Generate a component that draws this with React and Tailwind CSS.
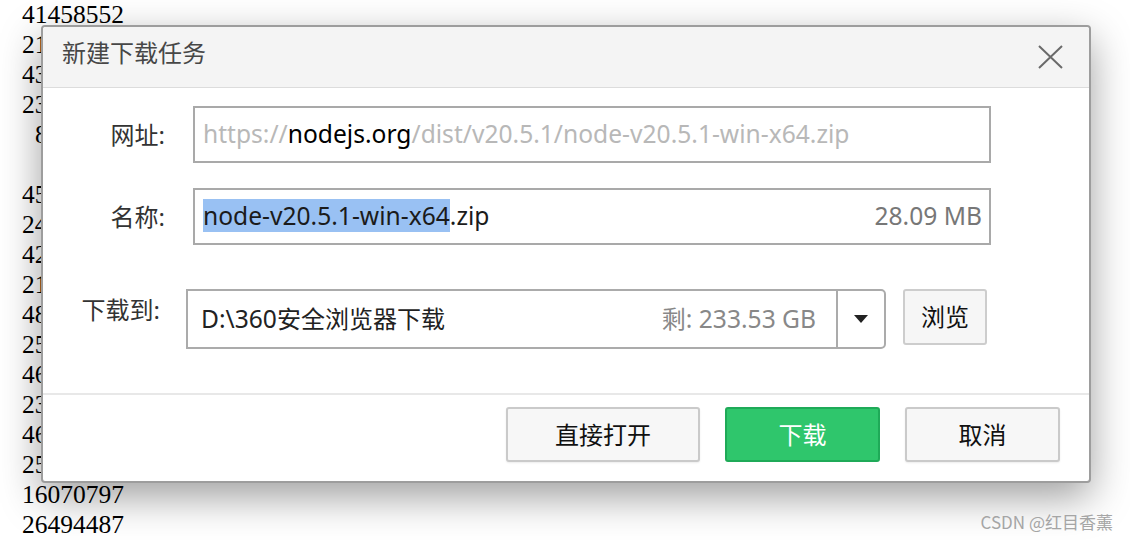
import React from 'react';

// only the digits that show left of the dialog are kept for the covered rows
const LINES = [
  '41458552', '21', '43', '23', '8', '',
  '45', '24', '42', '21', '48', '25',
  '46', '23', '46', '25', '16070797', '26494487',
];

const UI_FONT = "font-['Noto_Sans','Noto_Sans_CJK_SC',sans-serif]";

function Field({ children, className = '' }) {
  return (
    <div
      className={`flex items-center w-[798px] h-[57px] border-2 border-[#a9a9a9] bg-white pl-[8px] pr-[7px] ${className}`}
    >
      {children}
    </div>
  );
}

function GrayButton({ children, width }) {
  return (
    <button
      className={`${width} h-[55px] rounded-[3px] border-2 border-[#cacaca] bg-[#f7f7f7] text-[24px] text-[#111] shadow-[0_1px_2px_rgba(0,0,0,0.08)]`}
    >
      {children}
    </button>
  );
}

export default function App() {
  return (
    <div className="relative w-[1130px] h-[540px] overflow-hidden bg-white">
      {/* text dump behind the dialog */}
      <div className="pl-[22px] font-['Liberation_Serif',serif] text-[25.5px] leading-[30px] text-black">
        {LINES.map((line, i) => (
          <div key={i} className={`h-[30px] ${line === '8' ? 'pl-[13px]' : ''}`}>
            {line}
          </div>
        ))}
      </div>

      {/* download dialog */}
      <div
        className={`absolute left-[41px] top-[25px] w-[1050px] h-[458px] flex flex-col rounded-[4px] border-2 border-[#9d9d9d] bg-white shadow-[0_14px_40px_rgba(0,0,0,0.38)] ${UI_FONT}`}
      >
        <div className="flex items-center justify-between h-[61px] pl-[19px] pr-[26px] pb-[9px] bg-[#f4f4f4] border-b border-[#dcdcdc] rounded-t-[3px]">
          <span className="text-[24px] text-[#474747]">新建下载任务</span>
          <svg width="25" height="24" viewBox="0 0 25 24" className="mt-[8px]">
            <path d="M1 1 L24 23 M24 1 L1 23" stroke="#6a6a6a" strokeWidth="2" fill="none" />
          </svg>
        </div>

        <div className="flex flex-col pt-[18px] h-[305px] text-[#333]">
          <div className="flex items-center">
            <span className="w-[122px] text-right text-[24px]">网址:</span>
            <Field className="ml-[28px]">
              <span className="text-[24.6px] text-[#b8b8b8] whitespace-nowrap">
                https://<span className="text-black">nodejs.org</span>/dist/v20.5.1/node-v20.5.1-win-x64.zip
              </span>
            </Field>
          </div>

          <div className="flex items-center mt-[25px]">
            <span className="w-[122px] text-right text-[24px]">名称:</span>
            <Field className="ml-[28px] justify-between">
              <span className="text-[24.6px] text-[#1b1b1b] whitespace-nowrap">
                <span className="bg-[#99c1f3]">node-v20.5.1-win-x64</span>.zip
              </span>
              <span className="text-[24.6px] text-[#777]">28.09 MB</span>
            </Field>
          </div>

          <div className="flex items-start mt-[44px]">
            <span className="w-[117px] text-right text-[24px] mt-[3px]">下载到:</span>
            <div className="ml-[26px] flex w-[700px] h-[60px] border-2 border-[#ababab] rounded-r-[5px] bg-white">
              <div className="flex-1 flex items-center justify-between pl-[13px] pr-[20px]">
                <span className="text-[24px] text-[#222] whitespace-nowrap">
                  <span className="text-[24.6px]">D:\360</span>安全浏览器下载
                </span>
                <span className="text-[24.6px] text-[#888] whitespace-nowrap">
                  <span className="text-[24px]">剩</span>: 233.53 GB
                </span>
              </div>
              <div className="w-[48px] flex items-center justify-center border-l-2 border-[#ababab]">
                <svg width="14" height="8" viewBox="0 0 14 8">
                  <path d="M0 0 L14 0 L7 8 Z" fill="#222" />
                </svg>
              </div>
            </div>
            <button className="ml-[17px] w-[84px] h-[56px] rounded-[3px] border-2 border-[#cdcdcd] bg-[#f6f6f6] text-[24px] text-[#111]">
              浏览
            </button>
          </div>
        </div>

        <div className="flex justify-end gap-[25px] pt-[12px] pr-[29px] border-t-2 border-[#e8e8e8]">
          <GrayButton width="w-[194px]">直接打开</GrayButton>
          <button className="w-[155px] h-[55px] rounded-[3px] border-2 border-[#1faa58] bg-[#2fc66c] text-[24px] text-white">
            下载
          </button>
          <GrayButton width="w-[155px]">取消</GrayButton>
        </div>
      </div>

      <span className="absolute right-[17px] bottom-[6px] font-['Noto_Sans_CJK_SC',sans-serif] text-[17px] text-[#a5a5a5]">
        CSDN @红目香薰
      </span>
    </div>
  );
}
